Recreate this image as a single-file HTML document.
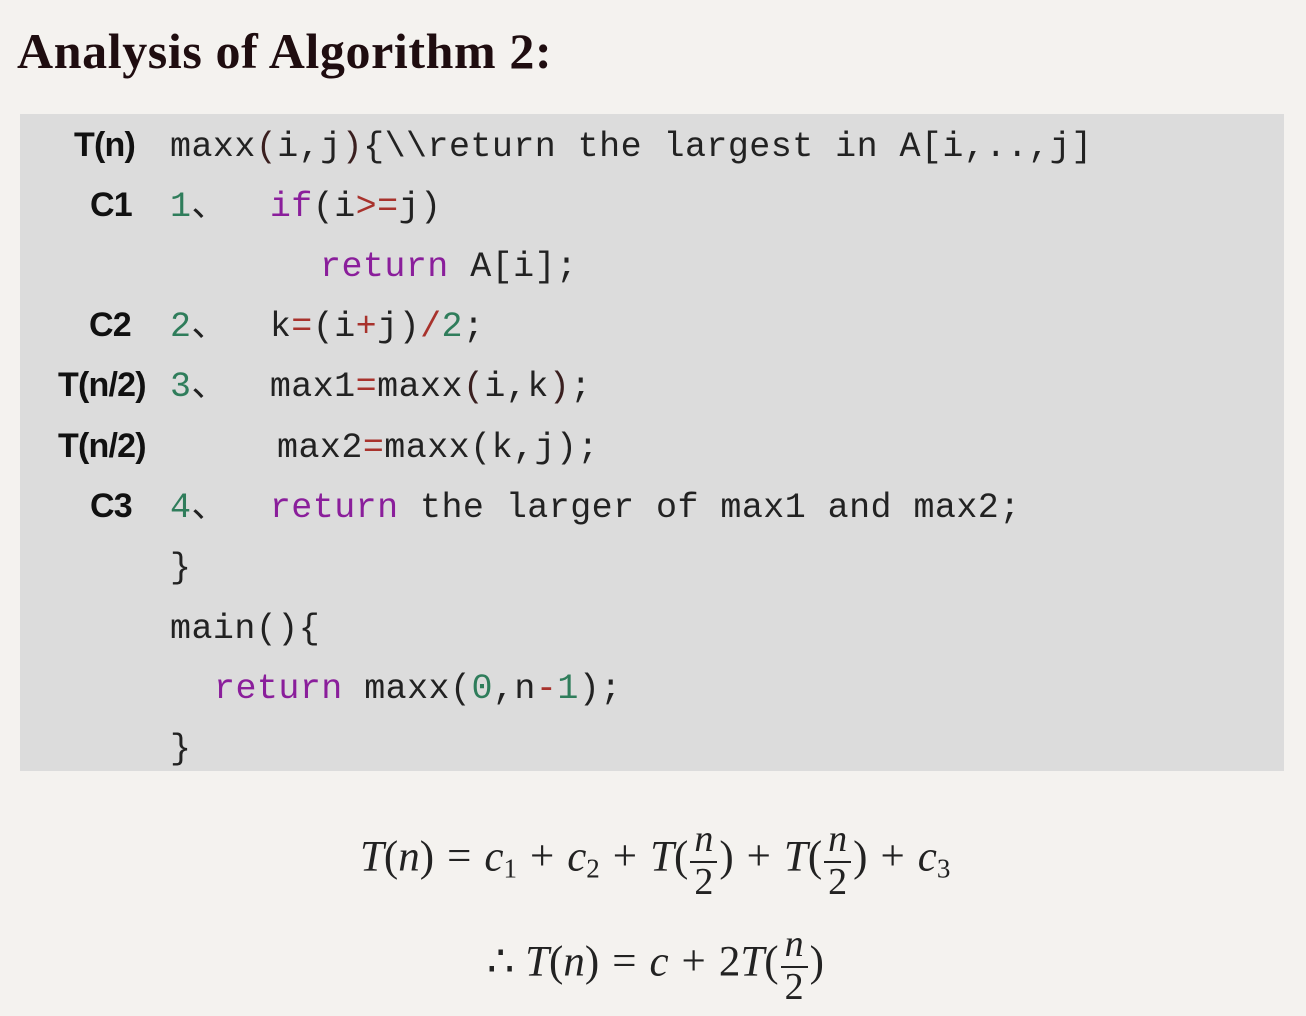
<!DOCTYPE html>
<html><head><meta charset="utf-8"><style>
body{margin:0;width:1306px;height:1016px;background:#f4f2ef;position:relative;overflow:hidden;font-family:"Liberation Serif",serif}
h1{position:absolute;left:17px;top:22px;margin:0;font-size:50px;font-weight:bold;color:#1f0d10;white-space:nowrap;letter-spacing:0.6px}
.box{position:absolute;left:20px;top:114px;width:1264px;height:657px;background:#dcdcdc}
.c{position:absolute;font-family:"Liberation Mono",monospace;font-size:35px;line-height:36px;color:#222;white-space:pre;letter-spacing:0.45px}
.l{position:absolute;font-family:"Liberation Sans",sans-serif;font-weight:bold;font-size:34px;line-height:36px;color:#111;white-space:pre;letter-spacing:-0.8px}
.p{color:#8a1e9b}.g{color:#2f7d5b}.r{color:#a8322c}.b{color:#3a1f1f}
.m{position:absolute;font-size:43px;color:#222;white-space:nowrap;line-height:1}
.m i{font-style:italic}
.o{margin:0 13px}
.fr{display:inline-block;vertical-align:middle;text-align:center;font-size:38px;line-height:1;margin:0 2px}
.fr span{display:block;padding:0 4px}
.fr .n{border-bottom:2px solid #222;font-style:italic;padding-bottom:3px}
sub{font-size:27px;vertical-align:-7px}
</style></head><body>
<h1>Analysis of Algorithm 2:</h1>
<div class="box"></div>
<div class="l" style="left:74px;top:127px">T(n)</div>
<div class="c" style="left:170px;top:129px">maxx<span class="b">(</span>i,j<span class="b">)</span>{\\return the largest in A[i,..,j]</div>
<div class="l" style="left:90px;top:187px">C1</div>
<div class="c" style="left:170px;top:189px"><span class="g">1</span>、  <span class="p">if</span>(i<span class="r">&gt;=</span>j)</div>
<div class="c" style="left:320px;top:249px"><span class="p">return</span> A[i];</div>
<div class="l" style="left:89px;top:307px">C2</div>
<div class="c" style="left:170px;top:309px"><span class="g">2</span>、  k<span class="r">=</span>(i<span class="r">+</span>j)<span class="r">/</span><span class="g">2</span>;</div>
<div class="l" style="left:58px;top:367px">T(n/2)</div>
<div class="c" style="left:170px;top:369px"><span class="g">3</span>、  max1<span class="r">=</span>maxx<span class="b">(</span>i,k<span class="b">)</span>;</div>
<div class="l" style="left:58px;top:428px">T(n/2)</div>
<div class="c" style="left:277px;top:430px">max2<span class="r">=</span>maxx(k,j);</div>
<div class="l" style="left:90px;top:488px">C3</div>
<div class="c" style="left:170px;top:490px"><span class="g">4</span>、  <span class="p">return</span> the larger of max1 and max2;</div>
<div class="c" style="left:170px;top:550px">}</div>
<div class="c" style="left:170px;top:611px">main(){</div>
<div class="c" style="left:214px;top:671px"><span class="p">return</span> maxx(<span class="g">0</span>,n<span class="r">-</span><span class="g">1</span>);</div>
<div class="c" style="left:170px;top:731px">}</div>

<div class="m" style="left:360px;top:820px"><i>T</i>(<i>n</i>)<span class="o">=</span><i>c</i><sub>1</sub><span class="o">+</span><i>c</i><sub>2</sub><span class="o">+</span><i>T</i>(<span class="fr"><span class="n">n</span><span>2</span></span>)<span class="o">+</span><i>T</i>(<span class="fr"><span class="n">n</span><span>2</span></span>)<span class="o">+</span><i>c</i><sub>3</sub></div>
<div class="m" style="left:487px;top:925px">∴ <i>T</i>(<i>n</i>)<span class="o">=</span><i>c</i><span class="o">+</span>2<i>T</i>(<span class="fr"><span class="n">n</span><span>2</span></span>)</div>
</body></html>
